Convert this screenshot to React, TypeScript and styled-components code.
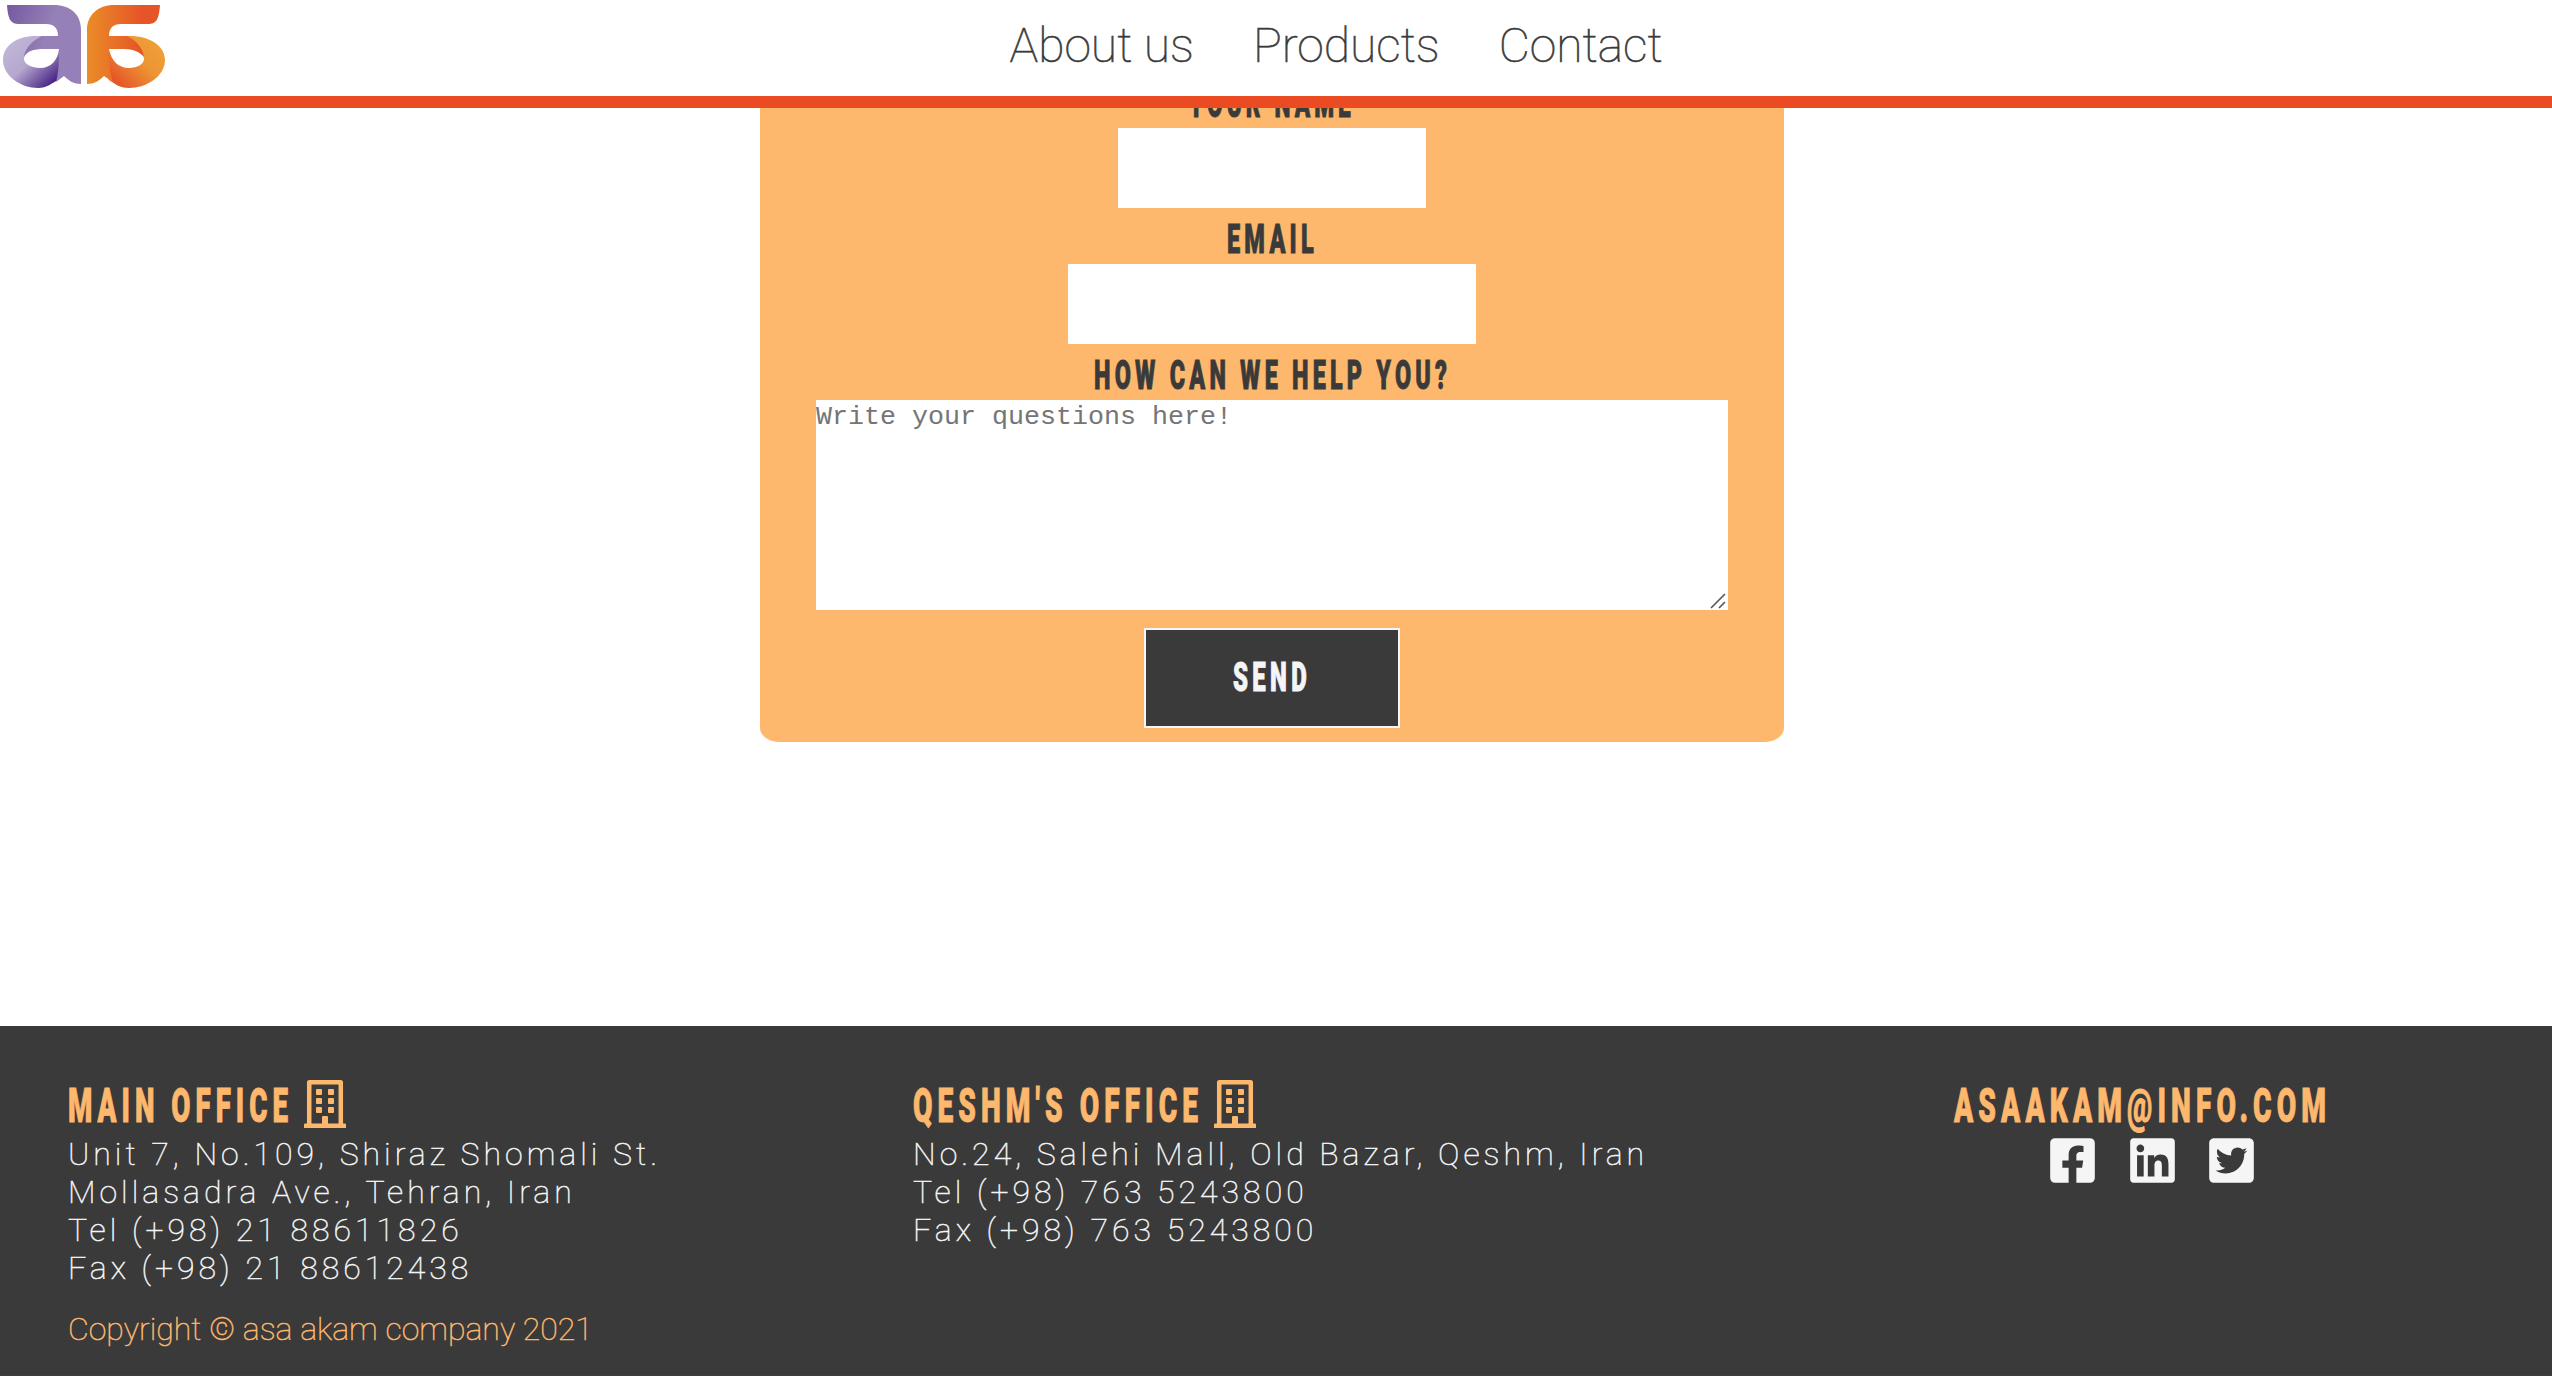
import React, { useLayoutEffect, useRef, useState } from "react";
import styled, { createGlobalStyle } from "styled-components";
import { FaRegBuilding, FaFacebookSquare, FaLinkedin, FaTwitterSquare } from "react-icons/fa";

const ink = "#3a3a3a";
const peach = "#fdb86d";
const smoke = "#f5f5f5";

const GlobalStyle = createGlobalStyle`
  * { box-sizing: border-box; }
  html, body { margin: 0; padding: 0; background: #fff; }
  body { font-family: Roboto, "Liberation Sans", sans-serif; overflow: hidden; color: ${ink}; }
`;

const Page = styled.div`
  height: 1376px;
  display: flex;
  flex-direction: column;
  overflow: hidden;
`;

const Header = styled.header`
  flex: none;
  height: 108px;
  border-bottom: 12px solid #eb4b23;
  background: #fff;
  display: grid;
  grid-template-columns: 1009.5px 1fr;
  position: relative;
  z-index: 1;
`;

const Logo = styled.svg`
  display: block;
  width: 170px;
  height: 92px;
`;

const Nav = styled.nav`
  display: flex;
  gap: 59px;
  padding-top: 18px;
`;

const NavLink = styled.a`
  font-size: 48px;
  line-height: 56px;
  font-weight: 100;
  white-space: nowrap;
  -webkit-text-stroke: 0.6px currentColor;
`;

const Main = styled.main`
  flex: 1;
  display: flex;
  flex-direction: column;
  align-items: flex-start;
  padding-left: 760px;
`;

const Form = styled.form`
  width: 1024px;
  height: 634px;
  background: ${peach};
  border-radius: 0 0 20px 20px / 0 0 14px 14px;
  display: flex;
  flex-direction: column;
  align-items: center;
`;

const DisplayBox = styled.span<{ $w: number }>`
  display: inline-flex;
  width: ${(p) => p.$w}px;
`;

const DisplayText = styled.span<{ $size: number }>`
  flex: none;
  font-weight: 900;
  font-size: ${(p) => p.$size}px;
  letter-spacing: 0.18em;
  white-space: nowrap;
  transform-origin: left center;
  -webkit-text-stroke: 0.9px currentColor;
`;

/* Narrow display lettering: a heavy face squeezed to a given width. */
function Display({ width, size, children }: { width: number; size: number; children: string }) {
  const ref = useRef<HTMLSpanElement>(null);
  const [scale, setScale] = useState(0.55);
  useLayoutEffect(() => {
    if (ref.current) setScale(width / ref.current.offsetWidth);
  }, [width, children]);
  return (
    <DisplayBox $w={width}>
      <DisplayText ref={ref} $size={size} style={{ transform: `scaleX(${scale})` }}>{children}</DisplayText>
    </DisplayBox>
  );
}

const Label = styled.label<{ $first?: boolean }>`
  height: 56px;
  flex: none;
  margin-top: ${(p) => (p.$first ? "-36px" : "0")};
  line-height: 64px;
`;

const Field = styled.input<{ $w: number }>`
  width: ${(p) => p.$w}px;
  height: 80px;
  border: 0;
  padding: 0;
  flex: none;
`;

const Area = styled.textarea`
  width: 912px;
  height: 210px;
  border: 0;
  padding: 1px 0 0;
  margin: 0;
  display: block;
  font-family: "Liberation Mono", monospace;
  font-size: 26.67px;
  line-height: 32px;
  resize: none;
  &::placeholder { color: #757575; }
`;

const AreaWrap = styled.div`
  position: relative;
  flex: none;
`;

const Grip = styled.svg`
  position: absolute;
  right: 1px;
  bottom: 1px;
  width: 17px;
  height: 16px;
`;

const Send = styled.button`
  width: 256px;
  height: 100px;
  flex: none;
  margin-top: 18px;
  border: 2px solid ${smoke};
  background: ${ink};
  color: ${smoke};
  font-family: inherit;
  padding: 0 0 2px;
`;

const Footer = styled.footer`
  flex: none;
  height: 350px;
  background: ${ink};
  color: ${smoke};
  padding: 51px 0 0 68px;
  border-bottom: 1px solid #46393f;
`;

const Columns = styled.div`
  display: grid;
  grid-template-columns: 845px 1041px 1fr;
  height: 233px;
`;

const Heading = styled.h2`
  margin: 0;
  height: 58px;
  color: ${peach};
  display: flex;
  gap: 11px;
  line-height: 57px;
  > svg { flex: none; width: 42px; height: 48px; margin-top: 3px; }
`;

const Address = styled.p`
  margin: 0;
  font-size: 32px;
  line-height: 38px;
  font-weight: 100;
  letter-spacing: 4px;
  white-space: nowrap;
  -webkit-text-stroke: 0.5px currentColor;
`;

const Social = styled.div`
  display: flex;
  gap: 28.6px;
  padding-left: 93px;
  > svg { width: 51px; height: 51px; }
`;

const Copyright = styled.p`
  margin: 0;
  color: ${peach};
  font-size: 32px;
  line-height: 38px;
  font-weight: 100;
  -webkit-text-stroke: 0.5px currentColor;
`;

export default function App() {
  return (
    <Page>
      <GlobalStyle />
      <Header>
        <Logo viewBox="0 0 170 92">
          <defs>
            <linearGradient id="pa" x1="0" y1="0" x2="1" y2="0.4">
              <stop offset="0" stopColor="#7658a0" />
              <stop offset="0.6" stopColor="#9580b7" />
              <stop offset="1" stopColor="#9580b7" />
            </linearGradient>
            <linearGradient id="pb" x1="0.1" y1="0.2" x2="0.85" y2="0.9">
              <stop offset="0" stopColor="#c0b5d6" />
              <stop offset="0.45" stopColor="#b5a7ce" />
              <stop offset="1" stopColor="#482485" />
            </linearGradient>
            <linearGradient id="oa" x1="0" y1="0" x2="1" y2="0">
              <stop offset="0" stopColor="#ea8d28" />
              <stop offset="0.75" stopColor="#e65427" />
              <stop offset="1" stopColor="#e65427" />
            </linearGradient>
            <linearGradient id="ob" x1="0.9" y1="0.1" x2="0.1" y2="0.8">
              <stop offset="0" stopColor="#efa038" />
              <stop offset="0.45" stopColor="#ec9534" />
              <stop offset="1" stopColor="#e65427" />
            </linearGradient>
          </defs>
          <path fill="url(#pb)" fillRule="evenodd" d="M36 36C16 36 3 46 3 60c0 16 18 28 35 28 9 0 14-5 20-8l4-8V36zM59 49H42c-11 0-18 4-18 10 0 5 8 9 16 9 11 0 18-8 19-19z" />
          <path fill="url(#pa)" d="M7 5h47c16 0 27 9 27 25v54c-7 0-12-3-17-8l-8 6c2-8 3-16 3-33H42c-8 0-15 2-18 8 1-9 8-16 18-21h16c0-8-4-12-12-12H19c-8 0-11-4-12-19z" />
          <path fill="url(#ob)" fillRule="evenodd" d="M130 36c20 0 35 10 35 24 0 16-18 28-36 28-10 0-15-5-20-8l-4-8V36zM109 49h17c11 0 18 4 18 10 0 5-7 9-15 9-11 0-18-8-20-19z" />
          <path fill="url(#oa)" d="M160 5h-46C98 5 87 15 87 30v54c7 0 12-3 17-8l9 6c-3-9-4-17-4-33h16c8 0 15 3 19 8-1-9-8-17-17-21h-18c0-8 4-12 12-12h27c8 0 11-4 12-19z" />
        </Logo>
        <Nav>
          <NavLink>About us</NavLink>
          <NavLink>Products</NavLink>
          <NavLink>Contact</NavLink>
        </Nav>
      </Header>
      <Main>
        <Form>
          <Label $first><Display width={166} size={40}>YOUR NAME</Display></Label>
          <Field $w={308} />
          <Label><Display width={91} size={40}>EMAIL</Display></Label>
          <Field $w={408} />
          <Label><Display width={357} size={40}>HOW CAN WE HELP YOU?</Display></Label>
          <AreaWrap>
            <Area placeholder="Write your questions here!" />
            <Grip viewBox="0 0 17 16" stroke="#555" strokeWidth="1.6" fill="none">
              <path d="M1 15L15 1M9 15l6-6" />
            </Grip>
          </AreaWrap>
          <Send type="button"><Display width={78} size={40}>SEND</Display></Send>
        </Form>
      </Main>
      <Footer>
        <Columns>
          <section>
            <Heading><Display width={225} size={49}>MAIN OFFICE</Display><FaRegBuilding /></Heading>
            <Address>Unit 7, No.109, Shiraz Shomali St.<br />Mollasadra Ave., Tehran, Iran<br />Tel (+98) 21 88611826<br />Fax (+98) 21 88612438</Address>
          </section>
          <section>
            <Heading><Display width={290} size={49}>QESHM'S OFFICE</Display><FaRegBuilding /></Heading>
            <Address>No.24, Salehi Mall, Old Bazar, Qeshm, Iran<br />Tel (+98) 763 5243800<br />Fax (+98) 763 5243800</Address>
          </section>
          <section>
            <Heading><Display width={377} size={49}>ASAAKAM@INFO.COM</Display></Heading>
            <Social><FaFacebookSquare /><FaLinkedin /><FaTwitterSquare /></Social>
          </section>
        </Columns>
        <Copyright>Copyright © asa akam company 2021</Copyright>
      </Footer>
    </Page>
  );
}
